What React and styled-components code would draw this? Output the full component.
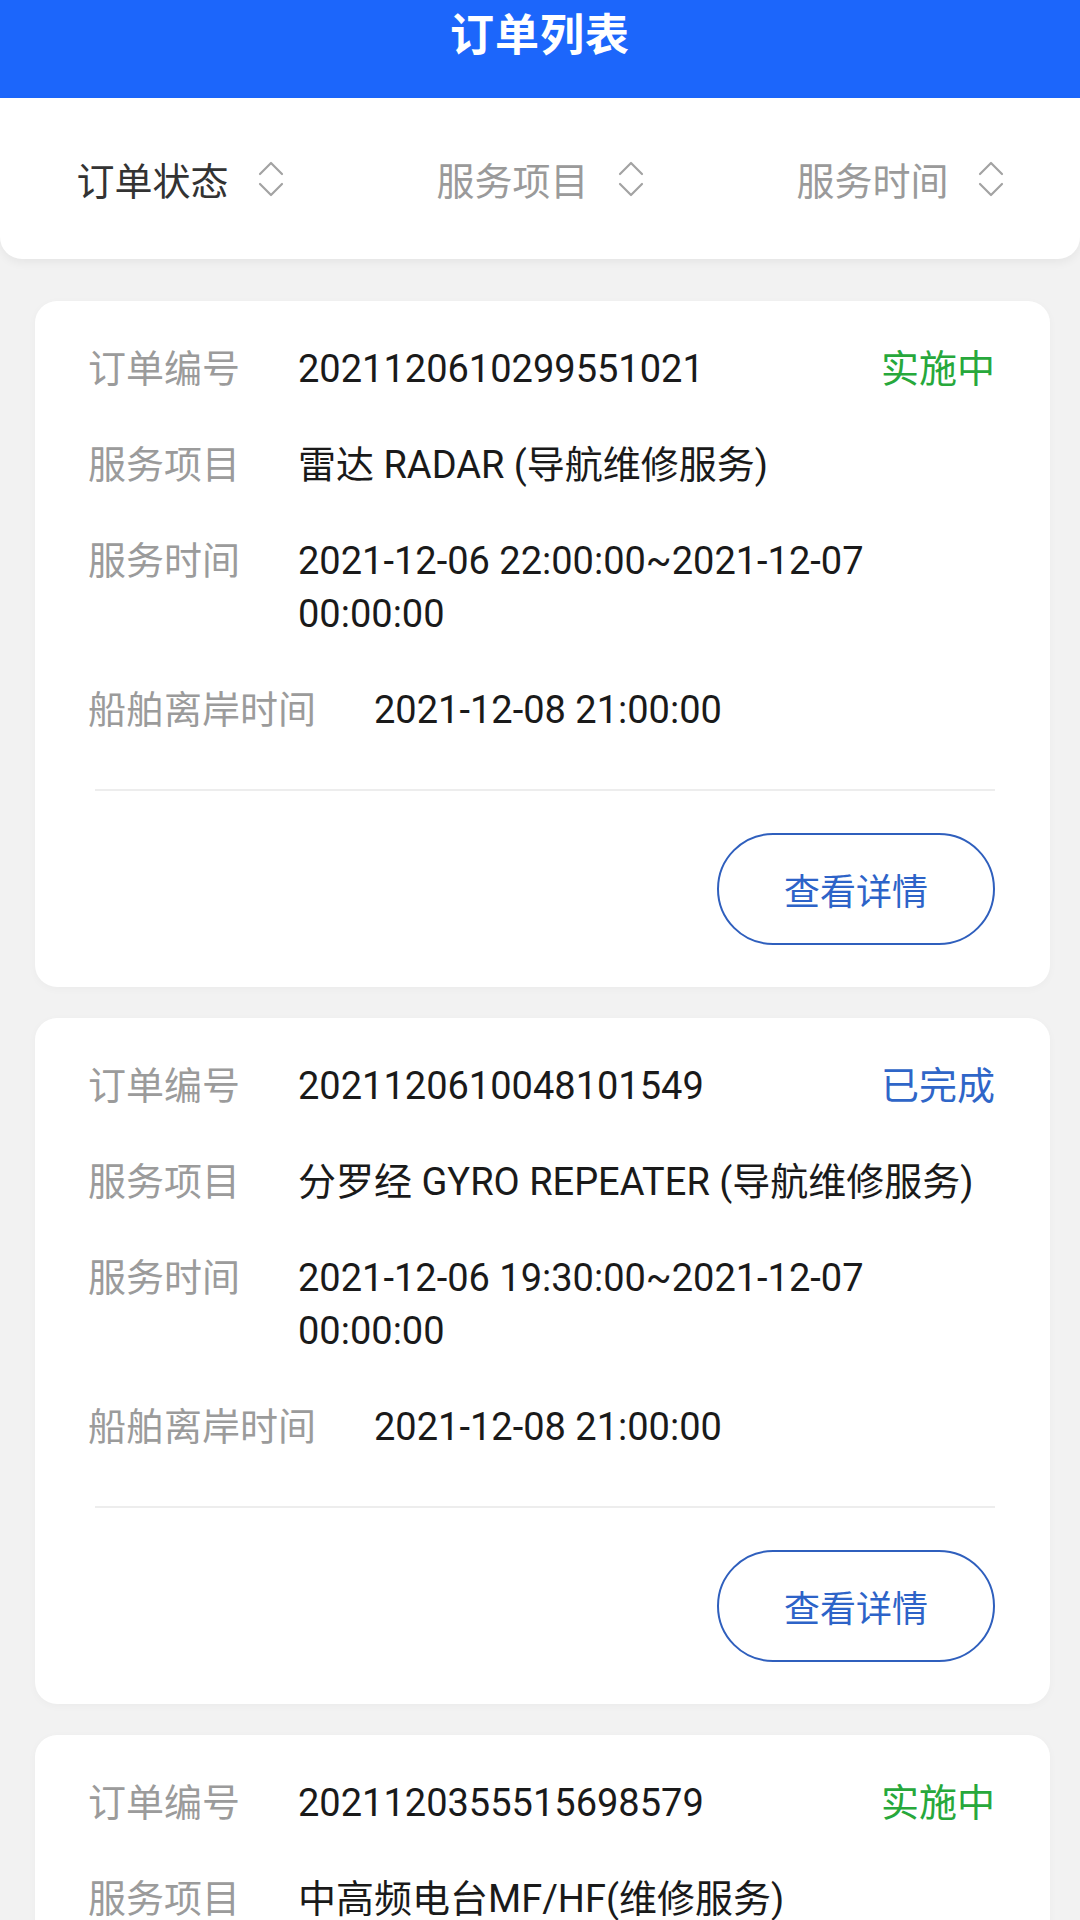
import React from "react";
import styled, { createGlobalStyle } from "styled-components";

const GlobalStyle = createGlobalStyle`
  html, body {
    margin: 0;
    padding: 0;
    background: #f2f2f2;
  }
  body {
    font-family: Roboto, "Noto Sans CJK SC", sans-serif;
    -webkit-font-smoothing: antialiased;
  }
`;

const filters = [
  { label: "订单状态", active: true },
  { label: "服务项目" },
  { label: "服务时间" },
];

const orders = [
  {
    id: "2021120610299551021",
    status: "实施中",
    done: false,
    item: "雷达 RADAR (导航维修服务)",
    time: "2021-12-06 22:00:00~2021-12-07 00:00:00",
    leave: "2021-12-08 21:00:00",
  },
  {
    id: "2021120610048101549",
    status: "已完成",
    done: true,
    item: "分罗经 GYRO REPEATER (导航维修服务)",
    time: "2021-12-06 19:30:00~2021-12-07 00:00:00",
    leave: "2021-12-08 21:00:00",
  },
  {
    id: "2021120355515698579",
    status: "实施中",
    done: false,
    item: "中高频电台MF/HF(维修服务)",
    time: "2021-12-03 09:00:00~2021-12-03 18:00:00",
    leave: "2021-12-05 21:00:00",
  },
];

// up/down sort arrows next to each filter
const SortIcon = () => (
  <svg width="26" height="36" viewBox="0 0 26 36" fill="none">
    <polyline
      points="2,13 13,2 24,13"
      stroke="#a3a3a3"
      strokeWidth="2.2"
      strokeLinecap="round"
      strokeLinejoin="round"
    />
    <polyline
      points="2,23 13,34 24,23"
      stroke="#a3a3a3"
      strokeWidth="2.2"
      strokeLinecap="round"
      strokeLinejoin="round"
    />
  </svg>
);

const OrderCard = ({ order }) => (
  <Card>
    <Rows>
      <Row>
        <Label>订单编号</Label>
        <Value>{order.id}</Value>
        <Status done={order.done}>{order.status}</Status>
      </Row>
      <Row>
        <Label>服务项目</Label>
        <Value>{order.item}</Value>
      </Row>
      <Row>
        <Label>服务时间</Label>
        <Value>{order.time}</Value>
      </Row>
      <Row>
        <Label>船舶离岸时间</Label>
        <Value>{order.leave}</Value>
      </Row>
    </Rows>
    <Divider />
    <Footer>
      <DetailButton>查看详情</DetailButton>
    </Footer>
  </Card>
);

const App = () => {
  return (
    <>
      <GlobalStyle />
      <Page>
        <Header>订单列表</Header>
        <FilterBar>
          {filters.map((f) => (
            <FilterItem key={f.label} active={f.active}>
              <span>{f.label}</span>
              <SortIcon />
            </FilterItem>
          ))}
        </FilterBar>
        <List>
          {orders.map((o) => (
            <OrderCard key={o.id} order={o} />
          ))}
        </List>
      </Page>
    </>
  );
};

const Page = styled.div`
  width: 1080px;
  min-height: 1920px;
  background: #f2f2f2;
`;

const Header = styled.div`
  height: 98px;
  box-sizing: border-box;
  padding-top: 6px;
  background: #1c66fb;
  color: #ffffff;
  font-size: 44px;
  font-weight: bold;
  line-height: 60px;
  text-align: center;
  letter-spacing: 1px;
`;

const FilterBar = styled.div`
  height: 161px;
  display: grid;
  grid-template-columns: repeat(3, 1fr);
  align-items: center;
  background: #ffffff;
  border-radius: 0 0 22px 22px;
  box-shadow: 0 4px 10px rgba(0, 0, 0, 0.05);
`;

const FilterItem = styled.div`
  display: flex;
  align-items: center;
  justify-content: center;
  gap: 29px;
  font-size: 38px;
  color: ${(p) => (p.active ? "#333333" : "#9a9a9a")};
`;

const List = styled.div`
  display: flex;
  flex-direction: column;
  gap: 31px;
  padding: 42px 30px 40px 35px;
`;

const Card = styled.div`
  background: #ffffff;
  border-radius: 22px;
  padding: 42px 55px 42px 53px;
  box-shadow: 0 2px 8px rgba(0, 0, 0, 0.03);
`;

const Rows = styled.div`
  display: flex;
  flex-direction: column;
  gap: 43px;
`;

const Row = styled.div`
  display: flex;
  align-items: flex-start;
  font-size: 38px;
  line-height: 53px;
`;

const Label = styled.div`
  flex-shrink: 0;
  margin-right: 58px;
  color: #9b9b9b;
`;

const Value = styled.div`
  flex: 1;
  color: #1a1a1a;
`;

const Status = styled.div`
  flex-shrink: 0;
  margin-left: 20px;
  color: ${(p) => (p.done ? "#2f66c8" : "#27a83b")};
`;

const Divider = styled.div`
  height: 2px;
  margin: 52px 0 0 7px;
  background: #ededed;
`;

const Footer = styled.div`
  display: flex;
  justify-content: flex-end;
  padding-top: 42px;
`;

const DetailButton = styled.button`
  width: 278px;
  height: 112px;
  box-sizing: border-box;
  border: 2px solid #2f5fbd;
  border-radius: 56px;
  background: #ffffff;
  color: #2d63c8;
  font-family: Roboto, "Noto Sans CJK SC", sans-serif;
  font-size: 36px;
  cursor: pointer;
`;

export default App;
